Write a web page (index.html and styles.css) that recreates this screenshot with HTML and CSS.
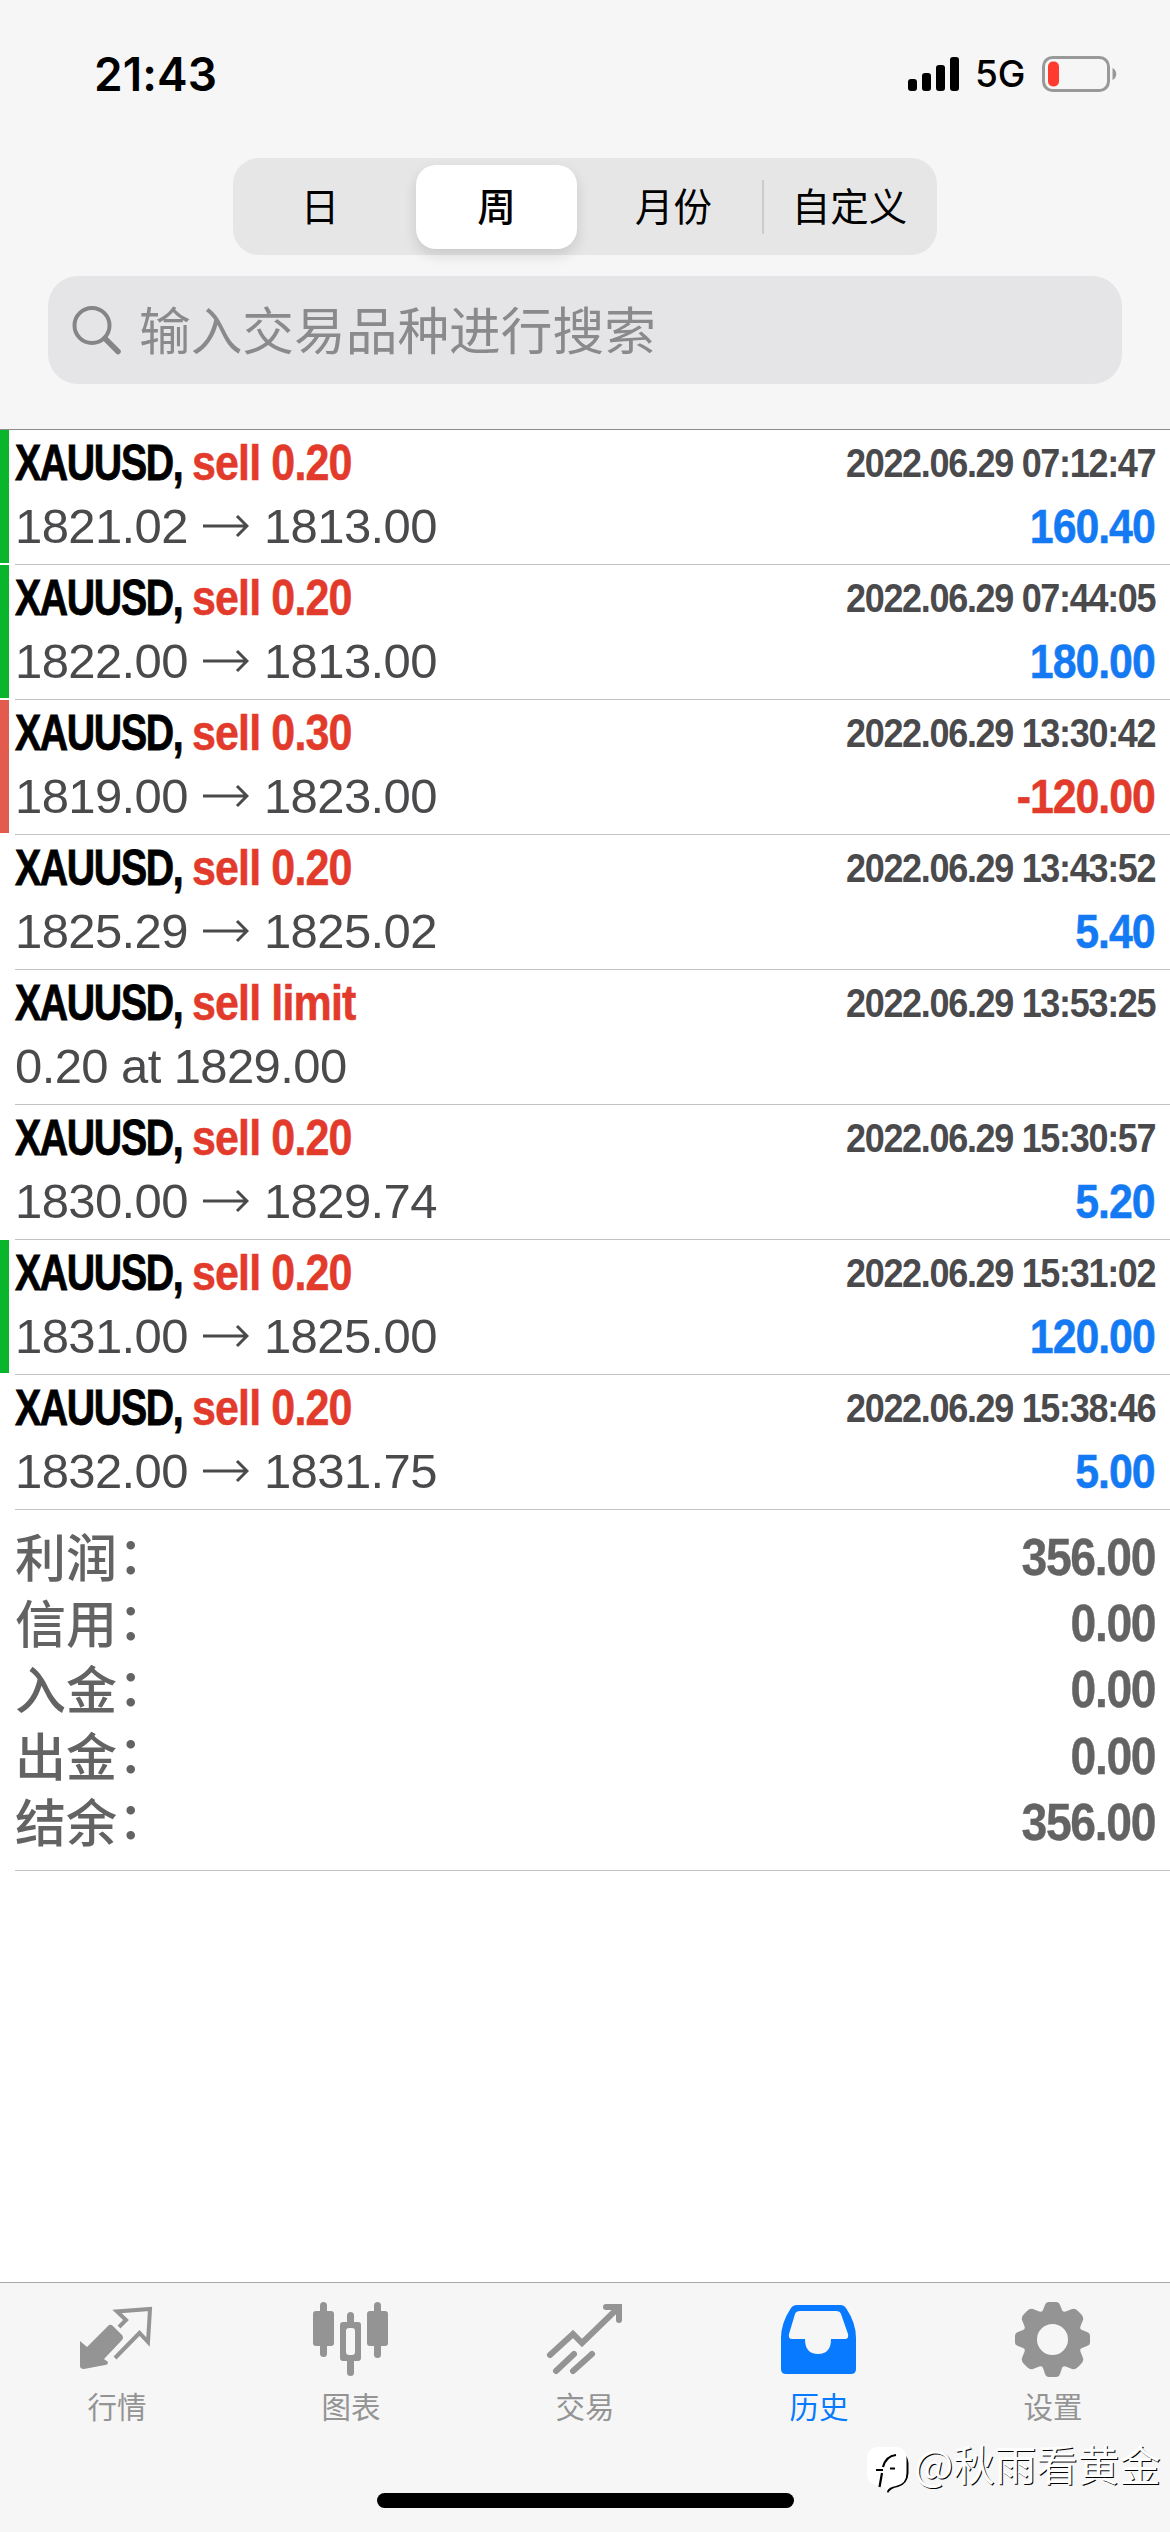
FILE: index.html
```html
<!DOCTYPE html>
<html lang="zh-CN">
<head>
<meta charset="utf-8">
<title>历史</title>
<link rel="stylesheet" href="styles.css">
</head>
<body>
<div class="screen">
  <header class="top">
    <div class="status">
      <span class="time">21:43</span>
      <div class="status-right">
        <svg class="signal" width="52" height="34" viewBox="0 0 52 34"><rect x="0" y="22" width="9" height="12" rx="3"/><rect x="14" y="16" width="9" height="18" rx="3"/><rect x="28" y="8" width="9" height="26" rx="3"/><rect x="42" y="0" width="9" height="34" rx="3"/></svg>
        <span class="net">5G</span>
        <svg class="battery" width="75" height="36" viewBox="0 0 75 36"><rect x="1.5" y="1.5" width="65" height="33" rx="9" fill="none" stroke="#999" stroke-width="3"/><path d="M70.500 12c5 2 5 10 0 12z" fill="#999"/><rect x="6" y="5.500" width="11" height="25" rx="5" fill="#ff3b2f"/></svg>
      </div>
    </div>
    <nav class="segments">
      <span class="segment">日</span>
      <span class="segment selected">周</span>
      <span class="segment">月份</span>
      <span class="segment ruled">自定义</span>
    </nav>
    <div class="search">
      <svg width="50" height="50" viewBox="0 0 50 50" fill="none" stroke="#858588" stroke-width="4"><circle cx="20" cy="20.500" r="17.500"/><path d="M33 33.500 46 46.500" stroke-width="5.500" stroke-linecap="round"/></svg>
      <span>输入交易品种进行搜索</span>
    </div>
  </header>

  <main class="history">
    <article class="deal win"><div class="head"><b class="symbol">XAUUSD,</b><b class="side">sell 0.20</b><time>2022.06.29 07:12:47</time></div><div class="line"><span class="price">1821.02</span><svg class="arrow" viewBox="0 0 46 24"><path d="M0 12H44M34 2l10 10-10 10"/></svg><span class="price">1813.00</span><b class="value">160.40</b></div></article>
    <article class="deal win"><div class="head"><b class="symbol">XAUUSD,</b><b class="side">sell 0.20</b><time>2022.06.29 07:44:05</time></div><div class="line"><span class="price">1822.00</span><svg class="arrow" viewBox="0 0 46 24"><path d="M0 12H44M34 2l10 10-10 10"/></svg><span class="price">1813.00</span><b class="value">180.00</b></div></article>
    <article class="deal loss"><div class="head"><b class="symbol">XAUUSD,</b><b class="side">sell 0.30</b><time>2022.06.29 13:30:42</time></div><div class="line"><span class="price">1819.00</span><svg class="arrow" viewBox="0 0 46 24"><path d="M0 12H44M34 2l10 10-10 10"/></svg><span class="price">1823.00</span><b class="value negative">-120.00</b></div></article>
    <article class="deal"><div class="head"><b class="symbol">XAUUSD,</b><b class="side">sell 0.20</b><time>2022.06.29 13:43:52</time></div><div class="line"><span class="price">1825.29</span><svg class="arrow" viewBox="0 0 46 24"><path d="M0 12H44M34 2l10 10-10 10"/></svg><span class="price">1825.02</span><b class="value">5.40</b></div></article>
    <article class="deal"><div class="head"><b class="symbol">XAUUSD,</b><b class="side">sell limit</b><time>2022.06.29 13:53:25</time></div><div class="line"><span class="price">0.20 at 1829.00</span></div></article>
    <article class="deal"><div class="head"><b class="symbol">XAUUSD,</b><b class="side">sell 0.20</b><time>2022.06.29 15:30:57</time></div><div class="line"><span class="price">1830.00</span><svg class="arrow" viewBox="0 0 46 24"><path d="M0 12H44M34 2l10 10-10 10"/></svg><span class="price">1829.74</span><b class="value">5.20</b></div></article>
    <article class="deal win"><div class="head"><b class="symbol">XAUUSD,</b><b class="side">sell 0.20</b><time>2022.06.29 15:31:02</time></div><div class="line"><span class="price">1831.00</span><svg class="arrow" viewBox="0 0 46 24"><path d="M0 12H44M34 2l10 10-10 10"/></svg><span class="price">1825.00</span><b class="value">120.00</b></div></article>
    <article class="deal"><div class="head"><b class="symbol">XAUUSD,</b><b class="side">sell 0.20</b><time>2022.06.29 15:38:46</time></div><div class="line"><span class="price">1832.00</span><svg class="arrow" viewBox="0 0 46 24"><path d="M0 12H44M34 2l10 10-10 10"/></svg><span class="price">1831.75</span><b class="value">5.00</b></div></article>
    <section class="summary">
      <div class="total"><span>利润<i>：</i></span><b>356.00</b></div>
      <div class="total"><span>信用<i>：</i></span><b>0.00</b></div>
      <div class="total"><span>入金<i>：</i></span><b>0.00</b></div>
      <div class="total"><span>出金<i>：</i></span><b>0.00</b></div>
      <div class="total"><span>结余<i>：</i></span><b>356.00</b></div>
    </section>
  </main>

  <footer class="tabs">
    <div class="tab"><svg viewBox="0 0 76 76"><path fill="currentColor" d="M1 41 8 47 30 25Q32 24 34 26L43 35Q45 38 43 40L25 59 29 62Q29 65 26 65L5 69Q1 69 1 66z"/><path fill="none" stroke="currentColor" stroke-width="4" d="M40 27 47 20 38 11.500 71 9 69 42 60.500 33 36 58"/></svg><span>行情</span></div>
    <div class="tab"><svg viewBox="0 0 76 76"><g fill="currentColor"><rect x="7" y="2" width="7" height="55" rx="3.500"/><rect x="0" y="11" width="21" height="35" rx="3"/><rect x="61" y="2" width="7" height="56" rx="3.500"/><rect x="54" y="11" width="21" height="35" rx="3"/><rect x="34" y="12" width="7" height="14" rx="3.500"/><rect x="34" y="55" width="7" height="21" rx="3.500"/><path fill-rule="evenodd" d="M30 22h15q3 0 3 3v33q0 3-3 3H30q-3 0-3-3V25q0-3 3-3zM36 28q-3 0-3 3v21q0 3 3 3h3q3 0 3-3V31q0-3-3-3z"/></g></svg><span>图表</span></div>
    <div class="tab"><svg viewBox="0 0 76 76" fill="none" stroke="currentColor" stroke-width="6" stroke-linecap="round"><path d="M3 55 26 34 35 43 70 9M59 7H72V20"/><path d="M9 71 27 54M26 71 45 54"/></svg><span>交易</span></div>
    <div class="tab active"><svg viewBox="0 0 76 76"><path fill="currentColor" fill-rule="evenodd" d="M16 5H60Q63 5 65 8Q75 23 75 38V69Q75 74 70 74H5Q0 74 0 69V38Q0 23 10 8Q12 5 16 5zM19 11Q15 11 14 14L8 34Q7 39 11 39H24Q24 54 37 54Q50 54 50 39H64Q68 39 67 34L60 14Q59 11 55 11z"/></svg><span>历史</span></div>
    <div class="tab"><svg viewBox="0 0 76 76"><path fill="currentColor" fill-rule="evenodd" d="M34 2H41Q44 2 45 5L47 10Q48 13 52 11L57 9Q60 8 63 11L66 14Q69 17 68 20L66 25Q64 29 67 30L72 32Q75 33 75 36V43Q75 45 72 46L67 48Q64 49 66 53L68 58Q69 61 66 64L63 67Q60 70 57 69L52 67Q48 65 47 68L45 74Q44 77 41 77H34Q31 77 30 74L28 68Q27 65 23 67L18 69Q15 70 12 67L9 64Q6 61 7 58L9 53Q11 49 8 48L3 46Q0 45 0 43V36Q0 33 3 32L8 30Q11 29 9 25L7 20Q6 17 9 14L12 11Q15 8 18 9L23 11Q27 13 28 10L30 5Q31 2 34 2zM37.500 24a15.500 15.500 0 1 0 0 31a15.500 15.500 0 1 0 0-31z"/></svg><span>设置</span></div>
    <i class="home"></i>
    <div class="watermark"><svg width="44" height="48" viewBox="0 0 44 48"><path d="M30 4Q41 7 41.500 16V26Q41 37 31 40Q24 41 21 46Q18 44 24 38L38 30z" fill="#000"/><path d="M12 0H28Q39.500 0 39.500 12V26Q39.500 37 29 39Q22 40 20 44Q17 39 12 39Q0 37 0 26V12Q0 0 12 0z" fill="#fff"/><path d="M16 20Q19 9 29 8M9 23H16M23 21.500H28M12.500 40 15 26" fill="none" stroke="#000" stroke-width="2.200"/></svg><span>@秋雨看黄金</span></div>
  </footer>
</div>
</body>
</html>
```

FILE: styles.css
```css
* { box-sizing: border-box; }
body { margin: 0; background: #fff; font-family: "Liberation Sans", "Noto Sans CJK SC", sans-serif; }
.screen { width: 1170px; height: 2532px; display: flex; flex-direction: column; overflow: hidden; background: #fff; }

.top { height: 430px; flex: none; background: #f6f6f6; border-bottom: 1px solid #8d8d8d; display: flex; flex-direction: column; align-items: center; }
.status { width: 100%; height: 158px; padding: 45px 53px 0 94px; display: flex; justify-content: space-between; align-items: flex-start; }
.time { font: 600 46px/58px Inter, sans-serif; letter-spacing: .1px; }
.status-right { display: flex; align-items: center; height: 58px; }
.signal { margin-right: 15px; }
.net { width: 67px; font: 500 37px/60px Inter, sans-serif; }

.segments { width: 704px; height: 97px; padding: 7px 0; border-radius: 26px; background: #e6e6e6; display: grid; grid-template-columns: 174px 178px 177px 175px; font: 400 38.500px/78px "Noto Sans CJK SC", sans-serif; text-align: center; }
.segment { height: 84px; }
.segment.selected { margin: 0 8px 0 9px; border-radius: 20px; background: #fff; font-weight: 500; box-shadow: 0 6px 14px rgba(0, 0, 0, .13); }
.segment.ruled { background: linear-gradient(#cbcbcd, #cbcbcd) 0 50% / 2px 54px no-repeat; }

.search { width: 1074px; height: 108px; margin-top: 21px; padding-left: 24px; border-radius: 30px; background: #e5e5e7; display: flex; align-items: center; gap: 17px; color: #8a8a8d; font: 400 51.700px/104px "Noto Sans CJK SC", sans-serif; }
.search span { height: 108px; }

.history { flex: 1; }
.deal { height: 135px; padding: 0 15px 0 15px; background: linear-gradient(#c3c3c3, #c3c3c3) 15px 100% / 100% 1px no-repeat; }
.win { background: linear-gradient(#c3c3c3, #c3c3c3) 15px 100% / 100% 1px no-repeat, linear-gradient(#08b52b, #08b52b) 0 0 / 9px 133px no-repeat; }
.loss { background: linear-gradient(#c3c3c3, #c3c3c3) 15px 100% / 100% 1px no-repeat, linear-gradient(#e35b4c, #e35b4c) 0 0 / 9px 133px no-repeat; }
.head { height: 66px; display: flex; align-items: flex-start; line-height: 67px; white-space: nowrap; }
.symbol, .side { font-size: 50px; transform-origin: left; }
.symbol { width: 177px; letter-spacing: -1.700px; transform: scaleX(.785); -webkit-text-stroke: .8px; }
.side { color: #e23a2b; letter-spacing: -1px; transform: scaleX(.86); -webkit-text-stroke: .5px; }
time { margin-left: auto; color: #4a4a4d; font-size: 41px; line-height: 66px; font-weight: 700; letter-spacing: -1.500px; transform: scaleX(.878); transform-origin: right; }
.line { height: 60px; display: flex; align-items: center; line-height: 60px; white-space: nowrap; }
.price { color: #4a4a4d; font-size: 49px; letter-spacing: -.6px; }
.arrow { width: 46px; height: 24px; margin: 0 15px; fill: none; stroke: #4a4a4d; stroke-width: 3; }
.value { margin-left: auto; color: #147af3; font-size: 49px; letter-spacing: -1.200px; transform: scaleX(.875); transform-origin: right; -webkit-text-stroke: .5px; }
.value.negative { color: #e23a2b; }

.summary { height: 361px; padding: 14px 15px 0 15px; background: linear-gradient(#c3c3c3, #c3c3c3) 15px 100% / 100% 1px no-repeat; color: #636363; }
.total { height: 66.200px; display: flex; align-items: flex-start; justify-content: space-between; }
.total span { font: 500 51px/62px "Noto Sans CJK SC", sans-serif; }
.total i { display: inline-block; font-style: normal; transform: translate(1px, -3px); }
.total b { font-size: 52px; line-height: 66px; letter-spacing: -1.500px; transform: scaleX(.89); transform-origin: right; -webkit-text-stroke: .4px; }

.tabs { position: relative; flex: none; height: 250px; border-top: 1px solid #a9a9a9; background: #f6f6f6; display: grid; grid-template-columns: repeat(5, 1fr); }
.tab { padding-top: 17px; display: flex; flex-direction: column; align-items: center; color: #949494; font: 400 29.500px/44px "Noto Sans CJK SC", sans-serif; }
.tab svg { width: 76px; height: 76px; margin-bottom: 7px; overflow: visible; }
.tab.active { color: #087aff; }
.home { position: absolute; left: 377px; bottom: 24px; width: 417px; height: 15px; border-radius: 8px; background: #000; }
.watermark { position: absolute; left: 867px; top: 159px; display: flex; align-items: flex-start; gap: 3px; white-space: nowrap; color: #fff; font: 400 41.500px/42px "Noto Sans CJK SC", sans-serif; text-shadow: 1px 1px 0 #000; }
.watermark svg { margin-top: 5px; }
```
